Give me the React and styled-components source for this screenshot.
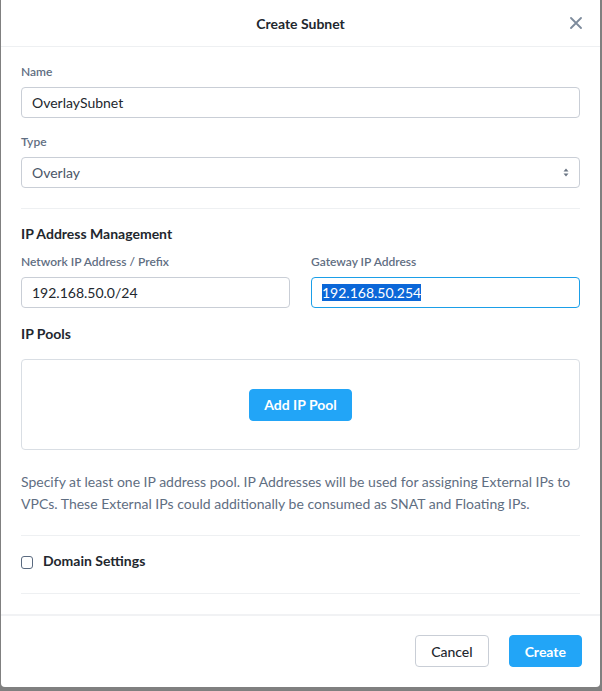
import React from 'react';
import styled, { createGlobalStyle } from 'styled-components';

const GlobalStyle = createGlobalStyle`
	html, body {
		margin: 0;
		padding: 0;
		background: #808080;
	}
	body {
		font-family: Lato, "Open Sans", "Liberation Sans", sans-serif;
		color: #22272e;
	}
	* {
		box-sizing: border-box;
	}
`;

const Backdrop = styled.div`
	width: 602px;
	height: 691px;
	padding: 0 2px 4px 1px;
	background: #808080;
`;

const Modal = styled.div`
	height: 687px;
	background: #fff;
	border-radius: 0 0 4px 4px;
	display: flex;
	flex-direction: column;
`;

const Header = styled.div`
	height: 47px;
	flex: none;
	display: flex;
	align-items: center;
	justify-content: center;
	position: relative;
	border-bottom: 1px solid #eef0f2;
`;

const Title = styled.h2`
	margin: 0;
	font-size: 14px;
	font-weight: 700;
	color: #22272e;
`;

const CloseButton = styled.button`
	position: absolute;
	right: 17px;
	top: 16px;
	width: 14px;
	height: 14px;
	padding: 0;
	border: none;
	background: none;
	display: flex;
	align-items: center;
	justify-content: center;
`;

const Body = styled.div`
	flex: 1;
	padding: 17px 20px 20px;
	border-bottom: 2px solid #f1f2f4;
`;

const Field = styled.div`
	margin-bottom: ${p => p.gap || 16}px;
`;

const Label = styled.label`
	display: block;
	font-size: 12px;
	line-height: 16px;
	font-weight: 600;
	color: #5f6e82;
	margin-bottom: 7px;
`;

const inputBase = `
	width: 100%;
	height: 31px;
	border: 1px solid #c9ced6;
	border-radius: 4px;
	padding: 0 10px;
	font-family: Lato, "Open Sans", "Liberation Sans", sans-serif;
	font-size: 14px;
	color: #22272e;
	background: #fff;
	outline: none;
`;

const Input = styled.input`
	${inputBase}
`;

const FocusedInput = styled.div`
	${inputBase}
	border-color: #1b9fe8;
	display: flex;
	align-items: center;
`;

const Selection = styled.span`
	background: #0b67d8;
	color: #fff;
	line-height: 17px;
`;

const SelectBox = styled.div`
	${inputBase}
	display: flex;
	align-items: center;
	justify-content: space-between;
	color: #4a5667;
`;

const Divider = styled.hr`
	margin: ${p => p.top || 0}px 0 ${p => p.bottom || 0}px;
	border: none;
	border-top: 1px solid #eef0f2;
`;

const SectionTitle = styled.h3`
	margin: 0 0 ${p => p.gap || 10}px;
	font-size: 14px;
	line-height: 20px;
	font-weight: 700;
	color: #22272e;
`;

const Row = styled.div`
	display: grid;
	grid-template-columns: 1fr 1fr;
	gap: 21px;
	margin-bottom: 16px;
`;

const PoolBox = styled.div`
	height: 91px;
	border: 1px solid #d9dee4;
	border-radius: 4px;
	display: flex;
	align-items: center;
	justify-content: center;
`;

const Button = styled.button`
	height: 32px;
	padding: 0 ${p => p.pad || 15}px;
	border-radius: 4px;
	font-family: Lato, "Open Sans", "Liberation Sans", sans-serif;
	font-size: 14px;
	font-weight: ${p => p.primary ? 700 : 500};
	color: ${p => p.primary ? '#fff' : '#22272e'};
	background: ${p => p.primary ? '#22a5f7' : '#fff'};
	border: 1px solid ${p => p.primary ? '#22a5f7' : '#c9ced6'};
	cursor: pointer;
`;

const HelpText = styled.p`
	margin: 21px 0 20px;
	font-size: 14px;
	line-height: 22px;
	color: #5f6e82;
`;

const CheckRow = styled.label`
	display: flex;
	align-items: center;
	gap: 10px;
	height: 57px;
	padding-bottom: 9px;
	font-size: 14px;
	font-weight: 700;
	color: #22272e;
`;

const CheckBox = styled.span`
	width: 12px;
	height: 13px;
	border: 1.5px solid #5a6a80;
	border-radius: 3px;
	margin-top: 4px;
`;

const Footer = styled.div`
	height: 73px;
	flex: none;
	display: flex;
	align-items: flex-start;
	justify-content: flex-end;
	gap: 20px;
	padding: 19px 18px 0 20px;
`;

const Arrows = () => (
	<svg width="6" height="9" viewBox="0 0 6 9">
		<path d="M3 0.5 L5.5 3.5 H0.5 Z" fill="#6b7684" />
		<path d="M3 8.5 L5.5 5.5 H0.5 Z" fill="#6b7684" />
	</svg>
);

const App = () => (
	<>
		<GlobalStyle />
		<Backdrop>
			<Modal>
				<Header>
					<Title>Create Subnet</Title>
					<CloseButton aria-label="Close">
						<svg width="12" height="12" viewBox="0 0 12 12">
							<path d="M1 1 L11 11 M11 1 L1 11" stroke="#7d8b9c" strokeWidth="1.8" strokeLinecap="round" />
						</svg>
					</CloseButton>
				</Header>

				<Body>
					<Field>
						<Label>Name</Label>
						<Input defaultValue="OverlaySubnet" />
					</Field>
					<Field gap={20}>
						<Label>Type</Label>
						<SelectBox>
							<span>Overlay</span>
							<Arrows />
						</SelectBox>
					</Field>

					<Divider bottom={15} />

					<SectionTitle gap={10}>IP Address Management</SectionTitle>
					<Row>
						<div>
							<Label>Network IP Address / Prefix</Label>
							<Input defaultValue="192.168.50.0/24" />
						</div>
						<div>
							<Label>Gateway IP Address</Label>
							<FocusedInput>
								<Selection>192.168.50.254</Selection>
							</FocusedInput>
						</div>
					</Row>

					<SectionTitle gap={15}>IP Pools</SectionTitle>
					<PoolBox>
						<Button primary pad={14}>Add IP Pool</Button>
					</PoolBox>

					<HelpText>
						Specify at least one IP address pool. IP Addresses will be used for assigning External IPs to
						VPCs. These External IPs could additionally be consumed as SNAT and Floating IPs.
					</HelpText>

					<Divider />
					<CheckRow>
						<CheckBox />
						Domain Settings
					</CheckRow>
					<Divider />
				</Body>

				<Footer>
					<Button pad={15}>Cancel</Button>
					<Button primary pad={15}>Create</Button>
				</Footer>
			</Modal>
		</Backdrop>
	</>
);

export default App;
